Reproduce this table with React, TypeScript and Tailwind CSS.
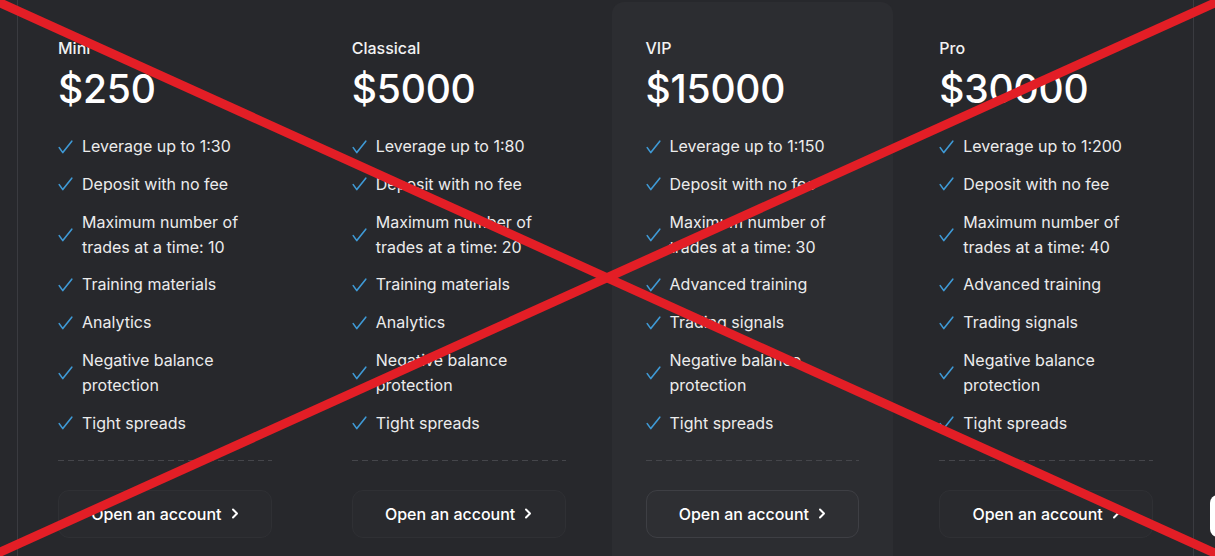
import React from "react";

type Plan = { name: string; price: string; features: string[]; highlight?: boolean };

const plans: Plan[] = [
  {
    name: "Mini",
    price: "$250",
    features: [
      "Leverage up to 1:30",
      "Deposit with no fee",
      "Maximum number of trades at a time: 10",
      "Training materials",
      "Analytics",
      "Negative balance protection",
      "Tight spreads",
    ],
  },
  {
    name: "Classical",
    price: "$5000",
    features: [
      "Leverage up to 1:80",
      "Deposit with no fee",
      "Maximum number of trades at a time: 20",
      "Training materials",
      "Analytics",
      "Negative balance protection",
      "Tight spreads",
    ],
  },
  {
    name: "VIP",
    price: "$15000",
    highlight: true,
    features: [
      "Leverage up to 1:150",
      "Deposit with no fee",
      "Maximum number of trades at a time: 30",
      "Advanced training",
      "Trading signals",
      "Negative balance protection",
      "Tight spreads",
    ],
  },
  {
    name: "Pro",
    price: "$30000",
    features: [
      "Leverage up to 1:200",
      "Deposit with no fee",
      "Maximum number of trades at a time: 40",
      "Advanced training",
      "Trading signals",
      "Negative balance protection",
      "Tight spreads",
    ],
  },
];

function Check() {
  return (
    <svg width="15" height="14" viewBox="0 0 15 14" fill="none" className="shrink-0">
      <path d="M1.2 7.6 L4.8 12.6 L13.8 1.2" stroke="#3f9ad6" strokeWidth="1.6" strokeLinecap="round" strokeLinejoin="round" />
    </svg>
  );
}

function Card({ plan }: { plan: Plan }) {
  return (
    <div className="px-[6px] h-full">
      <div
        className={
          plan.highlight
            ? "h-[620px] rounded-t-[12px] bg-[#2c2d31] px-[34px] pt-[34px]"
            : "h-[620px] px-[34px] pt-[34px]"
        }
      >
        <div className="text-[16px] leading-[24px] font-medium text-[#f2f2f2]">{plan.name}</div>
        <div className="mt-[5px] text-[39px] leading-[48px] font-medium text-white tracking-[-0.2px]">{plan.price}</div>
        <ul className="mt-[21px] flex flex-col gap-[12.8px]">
          {plan.features.map((f) => (
            <li key={f} className="flex items-center gap-[9px]">
              <Check />
              <span className="text-[16px] leading-[25px] text-[#ececec]">{f}</span>
            </li>
          ))}
        </ul>
        <div className="mt-[24px] h-px w-full bg-[linear-gradient(to_right,#45464b_65%,transparent_0)] bg-[length:10px_1px]" />
        <button
          className={
            plan.highlight
              ? "mt-[29px] flex h-[48px] w-full items-center justify-center gap-[9px] rounded-[11px] border border-[#3e3f44] bg-[#2e2f33] text-[16px] font-medium text-white"
              : "mt-[29px] flex h-[48px] w-full items-center justify-center gap-[9px] rounded-[11px] border border-[#2f3034] bg-[#292a2e] text-[16px] font-medium text-white"
          }
        >
          <span>Open an account</span>
          <svg width="8" height="11" viewBox="0 0 8 11" fill="none">
            <path d="M2 1.5 L6 5.5 L2 9.5" stroke="white" strokeWidth="2" strokeLinecap="round" strokeLinejoin="round" />
          </svg>
        </button>
      </div>
    </div>
  );
}

export default function App() {
  return (
    <div
      className="relative flex h-[556px] w-[1215px] overflow-hidden bg-[#27282c]"
      style={{ fontFamily: "Inter, 'Noto Sans', sans-serif" }}
    >
      <div className="w-[17px] shrink-0" />
      <div className="grid h-full w-[1177px] shrink-0 grid-cols-4 border-x border-[#3a3b40] pt-[2px]">
        {plans.map((p) => (
          <Card key={p.name} plan={p} />
        ))}
      </div>
      <div className="ml-[16px] mt-[495px] h-[42px] w-[40px] shrink-0 rounded-[8px] bg-white" />
      <svg
        className="pointer-events-none absolute inset-0"
        width="1215"
        height="556"
        viewBox="0 0 1215 556"
      >
        <line x1="-4" y1="1" x2="1219" y2="555" stroke="#e31e26" strokeWidth="9" />
        <line x1="1219" y1="1" x2="-4" y2="554" stroke="#e31e26" strokeWidth="9" />
      </svg>
    </div>
  );
}
